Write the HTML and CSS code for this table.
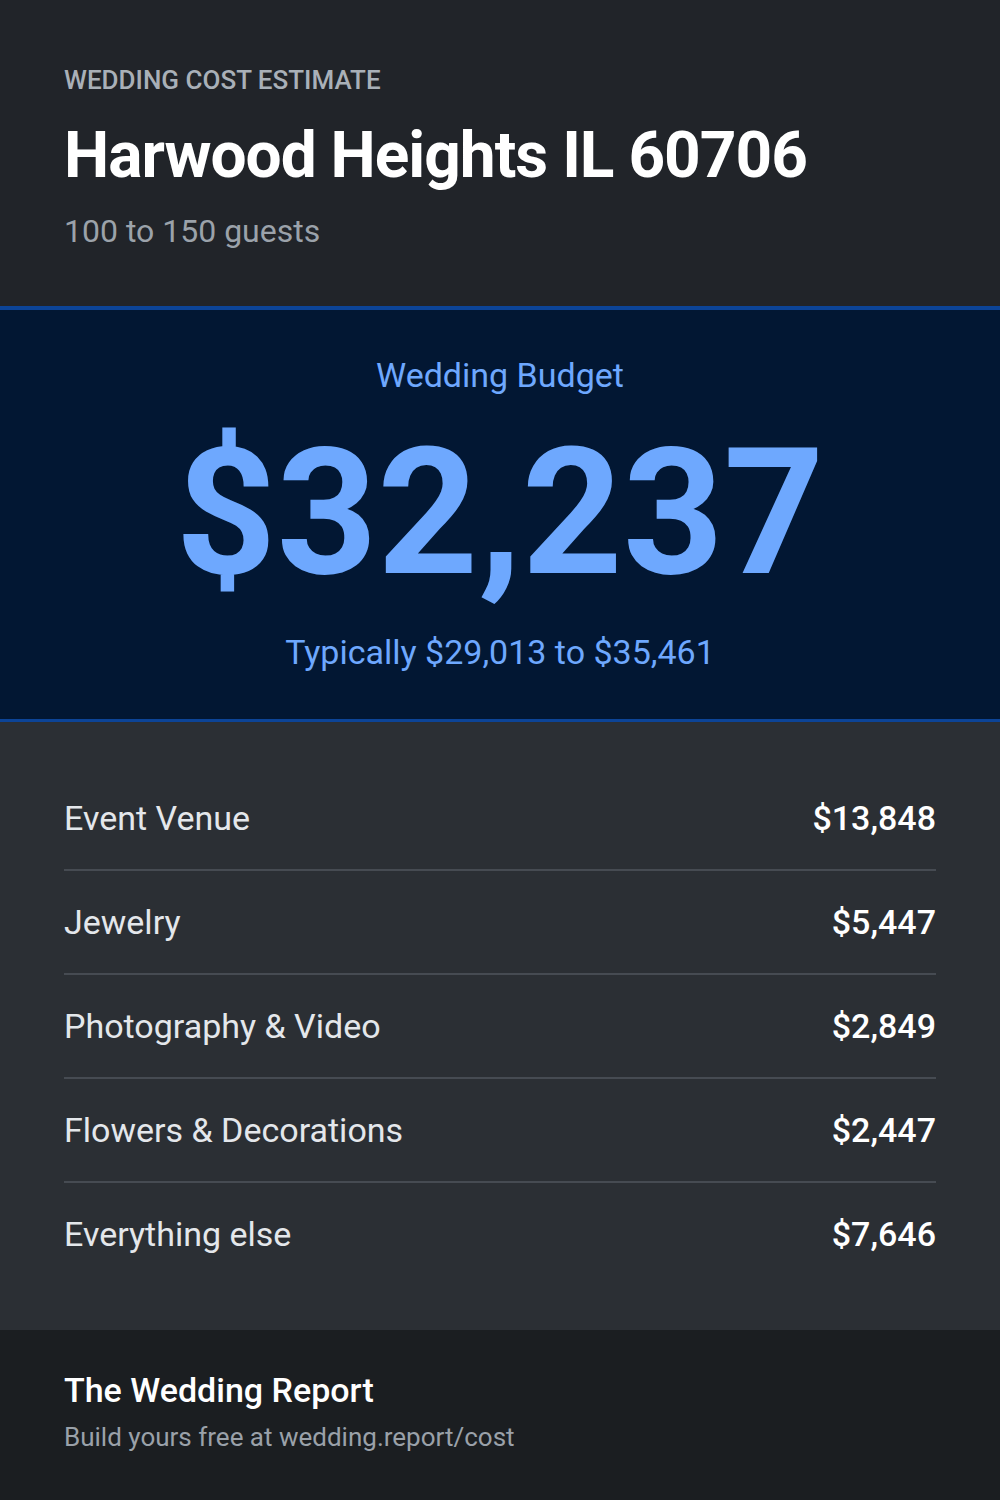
FILE: index.html
```
<!DOCTYPE html>
<html lang="en">
<head>
<meta charset="utf-8">
<title>Wedding Cost Estimate</title>
<link rel="stylesheet" href="styles.css">
</head>
<body>
<div class="card">
  <header class="head">
    <div class="eyebrow">WEDDING COST ESTIMATE</div>
    <h1 class="title">Harwood Heights IL 60706</h1>
    <div class="guests">100 to 150 guests</div>
  </header>
  <section class="hero">
    <div class="hero-label">Wedding Budget</div>
    <div class="hero-amount">$32,237</div>
    <div class="hero-range">Typically $29,013 to $35,461</div>
  </section>
  <section class="breakdown">
    <div class="row"><span class="name">Event Venue</span><span class="amt">$13,848</span></div>
    <div class="row"><span class="name">Jewelry</span><span class="amt">$5,447</span></div>
    <div class="row"><span class="name">Photography &amp; Video</span><span class="amt">$2,849</span></div>
    <div class="row"><span class="name">Flowers &amp; Decorations</span><span class="amt">$2,447</span></div>
    <div class="row"><span class="name">Everything else</span><span class="amt">$7,646</span></div>
  </section>
  <footer class="foot">
    <div class="brand">The Wedding Report</div>
    <div class="cta">Build yours free at wedding.report/cost</div>
  </footer>
</div>
</body>
</html>
```
FILE: styles.css
```
* { box-sizing: border-box; }
html, body { margin: 0; padding: 0; }
body {
  font-family: Roboto, "Liberation Sans", sans-serif;
  background: #1b1e21;
  width: 1000px;
}
.card { width: 1000px; height: 1500px; display: flex; flex-direction: column; }

.head {
  background: #212429;
  padding: 64px 64px 55px;
}
.eyebrow {
  font-size: 26px;
  line-height: 32px;
  font-weight: 500;
  color: #a9b0b8;
}
.title {
  margin: 22px 0 0;
  font-size: 64px;
  line-height: 76px;
  font-weight: 700;
  color: #ffffff;
  letter-spacing: -1px;
}
.guests {
  margin-top: 17px;
  font-size: 32px;
  line-height: 40px;
  color: #9ba2aa;
}

.hero {
  background: #021733;
  border-top: 4px solid #0c4497;
  border-bottom: 3px solid #0c4497;
  padding: 45px 64px 47px;
  text-align: center;
  color: #6ea8fe;
}
.hero-label { font-size: 34px; line-height: 40px; }
.hero-amount {
  margin-top: 30px;
  font-size: 176px;
  line-height: 176px;
  font-weight: 700;
}
.hero-range { margin-top: 31px; font-size: 34px; line-height: 40px; }

.breakdown {
  background: #2b2f34;
  padding: 45px 64px;
  display: flex;
  flex-direction: column;
}
.row {
  display: flex;
  justify-content: space-between;
  align-items: center;
  padding: 31px 0;
  border-bottom: 2px solid #464b52;
  font-size: 34px;
  line-height: 40px;
}
.row:last-child { border-bottom: none; }
.name { color: #e4e7eb; }
.amt { color: #ffffff; font-weight: 500; }

.foot {
  flex: 1;
  background: #1b1e21;
  padding: 40px 64px 47px;
}
.brand { font-size: 34px; line-height: 40px; font-weight: 500; color: #ffffff; }
.cta { margin-top: 11px; font-size: 26px; line-height: 32px; color: #9aa1a9; }
```
